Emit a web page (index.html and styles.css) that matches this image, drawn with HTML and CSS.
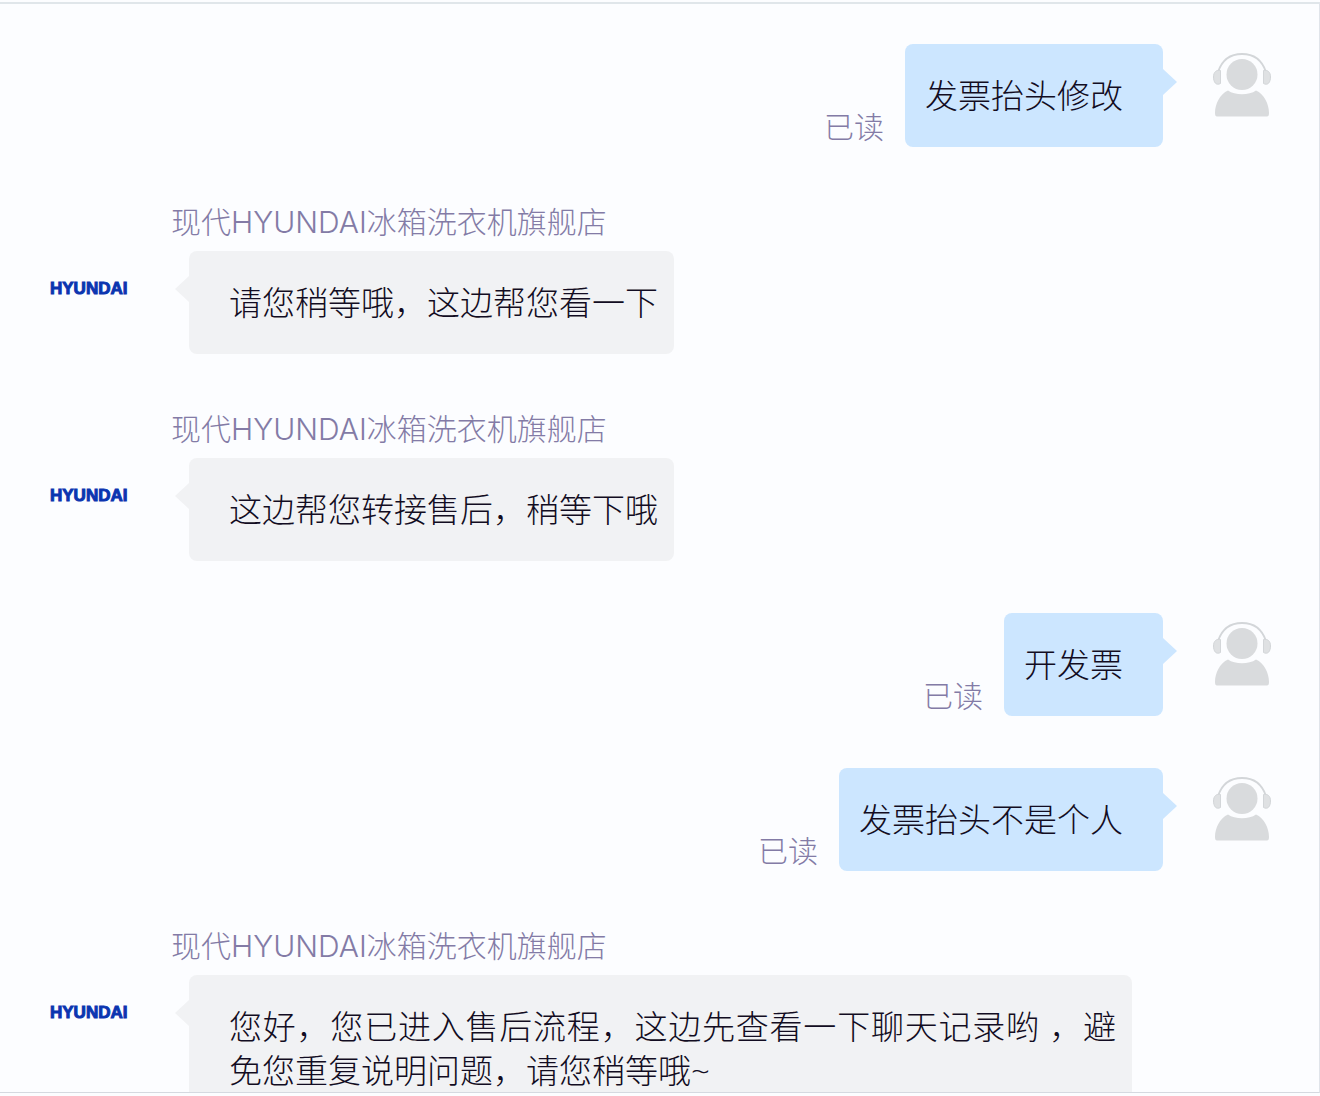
FILE: index.html
```html
<!DOCTYPE html>
<html lang="zh-CN">
<head>
  <meta charset="UTF-8">
  <title>现代HYUNDAI冰箱洗衣机旗舰店</title>
  <link rel="stylesheet" href="styles.css">
</head>
<body>
  <!-- Customer avatar, reused by each sent message -->
  <svg class="symbols" aria-hidden="true">
    <symbol id="avatar" viewBox="0 0 60 66">
      <circle cx="30" cy="22.500" r="15.500" fill="#d9dbdd"/>
      <path d="M6 20 C10 8 19 2 30 2 C41 2 50 8 54 20" fill="none" stroke="#d3d6d9" stroke-width="1.800"/>
      <path d="M8.500 18.500 V31.500 C4 34 1.500 30 1.500 25 C1.500 20 4.500 17.500 8.500 18.500 Z" fill="#dfe1e3" stroke="#d3d6d9"/>
      <path d="M51.500 18.500 V31.500 C56 34 58.500 30 58.500 25 C58.500 20 55.500 17.500 51.500 18.500 Z" fill="#dfe1e3" stroke="#d3d6d9"/>
      <path d="M16 38.500 C23 43.500 37 43.500 44 38.500 C52 42 57 52 57 61 Q57 64.500 55 64.500 H5 Q3 64.500 3 61 C3 52 8 42 16 38.500 Z" fill="#d9dbdd"/>
    </symbol>
  </svg>

  <main class="chat">
    <!-- Sent message -->
    <div class="message sent">
      <span class="status">已读</span>
      <p class="bubble">发票抬头修改</p>
      <svg class="avatar"><use href="#avatar"/></svg>
    </div>

    <!-- Received messages -->
    <div class="message received">
      <div class="logo">HYUNDAI</div>
      <div class="content">
        <div class="name">现代HYUNDAI冰箱洗衣机旗舰店</div>
        <p class="bubble">请您稍等哦，这边帮您看一下</p>
      </div>
    </div>

    <div class="message received">
      <div class="logo">HYUNDAI</div>
      <div class="content">
        <div class="name">现代HYUNDAI冰箱洗衣机旗舰店</div>
        <p class="bubble">这边帮您转接售后，稍等下哦</p>
      </div>
    </div>

    <div class="message sent">
      <span class="status">已读</span>
      <p class="bubble">开发票</p>
      <svg class="avatar"><use href="#avatar"/></svg>
    </div>

    <div class="message sent">
      <span class="status">已读</span>
      <p class="bubble">发票抬头不是个人</p>
      <svg class="avatar"><use href="#avatar"/></svg>
    </div>

    <div class="message received">
      <div class="logo">HYUNDAI</div>
      <div class="content">
        <div class="name">现代HYUNDAI冰箱洗衣机旗舰店</div>
        <p class="bubble">您好，您已进入售后流程，这边先查看一下聊天记录哟 ，避免您重复说明问题，请您稍等哦~</p>
      </div>
    </div>
  </main>
</body>
</html>
```
FILE: styles.css
```css
* {
  box-sizing: border-box;
}

/* Body style */
body {
  margin: 0;
  padding: 2px 0 3px;
  height: 100vh;
  overflow: hidden;
  background: #fcfdff;
  color: #120c22;
  font-family: "Open Sans", "Noto Sans CJK SC", sans-serif;
  font-weight: 300;
}

.symbols {
  display: none;
}

/* Chat window */
.chat {
  display: flex;
  flex-direction: column;
  gap: 52px;
  height: 100%;
  padding: 40px 47px 0 50px;
  overflow: hidden;
  border-top: 2px solid #e0e6ea;
  border-right: 1px solid #e0e4ea;
  border-bottom: 1px solid #d5d9e0;
}

.message {
  display: flex;
  flex-shrink: 0;
}

/* Speech bubble */
.bubble {
  position: relative;
  width: fit-content;
  margin: 0;
  border-radius: 8px;
  font-size: 33px;
  line-height: 44px;
  text-align: justify;
}

.bubble::before {
  content: "";
  position: absolute;
  top: 25px;
  width: 14px;
  height: 26px;
}

/* Messages from the customer */
.sent {
  justify-content: flex-end;
}

.sent .bubble {
  padding: 30px 40px 29px 20px;
  background: #cce6ff;
}

.sent .bubble::before {
  left: 100%;
  background: #cce6ff;
  clip-path: polygon(0 0, 100% 50%, 0 100%);
}

.status {
  align-self: flex-end;
  margin-right: 21px;
  color: #837ba6;
  font-size: 30px;
  line-height: 40px;
}

.avatar {
  width: 60px;
  height: 66px;
  margin: 8px 0 0 49px;
}

/* Messages from the shop */
.received .content {
  flex: 1;
  padding: 0 140px 0 41px;
}

.name {
  margin-bottom: 6px;
  color: #837ba6;
  font-family: Inter, "Noto Sans CJK SC", sans-serif;
  font-size: 30px;
  line-height: 46px;
}

.received .bubble {
  margin-left: 18px;
  padding: 30px 16px 29px 40px;
  background: #f1f2f4;
}

.received .bubble::before {
  right: 100%;
  background: #f1f2f4;
  clip-path: polygon(100% 0, 0 50%, 100% 100%);
}

.logo {
  width: 80px;
  margin-top: 80px;
  color: #0b35b0;
  font-family: "Liberation Sans", Arial, sans-serif;
  font-size: 17px;
  font-weight: 700;
  line-height: 20px;
  -webkit-text-stroke: 1px #0b35b0;
}
```
